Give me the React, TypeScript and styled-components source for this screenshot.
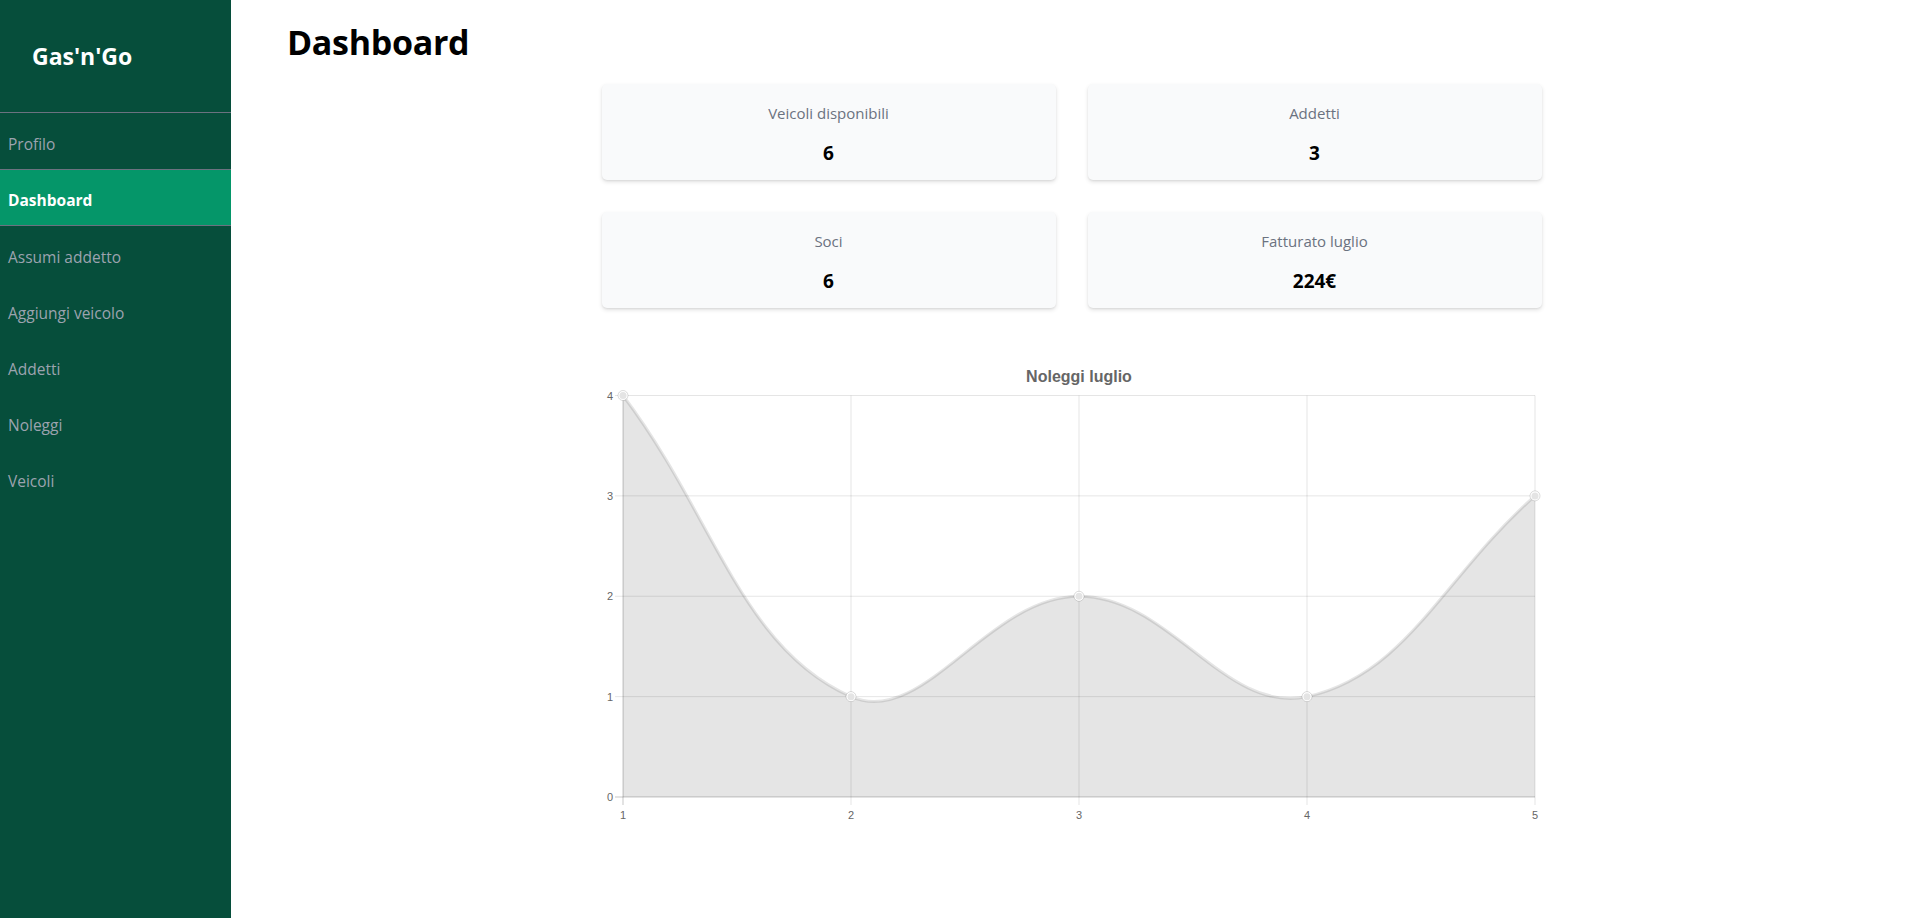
import styled, { createGlobalStyle } from 'styled-components';
import { FunctionComponent } from 'react';

const GlobalStyle = createGlobalStyle`
    * {
        box-sizing: border-box;
    }
    html, body {
        margin: 0;
        padding: 0;
        height: 100%;
        background: #ffffff;
        font-family: 'Open Sans', 'Noto Sans', sans-serif;
    }
    #root {
        height: 100%;
    }
`;

const Layout = styled.div`
    display: flex;
    min-height: 918px;
    height: 100%;
`;

const Sidebar = styled.aside`
    width: 231px;
    flex-shrink: 0;
    background: #064e3b;
    display: flex;
    flex-direction: column;
`;

const Brand = styled.div`
    height: 113px;
    display: flex;
    align-items: center;
    padding-left: 32px;
    border-bottom: 1px solid #6b7280;
    color: #ffffff;
    font-size: 23px;
    font-weight: 700;
`;

const NavItem = styled.a<{ $active?: boolean }>`
    display: flex;
    align-items: center;
    height: ${(p) => (p.$active ? '57px' : '56px')};
    padding: 5px 0 0 8px;
    font-size: 15.5px;
    text-decoration: none;
    color: ${(p) => (p.$active ? '#ffffff' : '#9ca3af')};
    font-weight: ${(p) => (p.$active ? 700 : 400)};
    background: ${(p) => (p.$active ? '#059669' : 'transparent')};
    border-top: ${(p) => (p.$active ? '1px solid #6b7280' : 'none')};
    border-bottom: ${(p) => (p.$active ? '1px solid #6b7280' : 'none')};
`;

const Main = styled.main`
    flex: 1;
    padding: 14px 56px 0;
`;

const Title = styled.h1`
    margin: 0;
    font-size: 34px;
    line-height: 56px;
    font-weight: 700;
    color: #000000;
    letter-spacing: -0.3px;
`;

const Content = styled.div`
    width: 940px;
    margin: 14px auto 0;
`;

const Stats = styled.div`
    display: grid;
    grid-template-columns: 1fr 1fr;
    gap: 32px;
`;

const Card = styled.div`
    height: 96px;
    background: #f9fafb;
    border-radius: 5px;
    box-shadow: 0 2px 4px rgba(0, 0, 0, 0.12), 0 1px 2px rgba(0, 0, 0, 0.06);
    display: flex;
    flex-direction: column;
    align-items: center;
    padding-top: 16px;
`;

const CardLabel = styled.span`
    font-size: 15px;
    line-height: 26px;
    color: #6b7280;
`;

const CardValue = styled.span`
    margin-top: 14px;
    font-size: 19px;
    line-height: 26px;
    font-weight: 700;
    color: #000000;
`;

const ChartBox = styled.div`
    margin-top: 40px;
    svg {
        display: block;
    }
`;

const menu = ['Profilo', 'Dashboard', 'Assumi addetto', 'Aggiungi veicolo', 'Addetti', 'Noleggi', 'Veicoli'];

const stats = [
    { label: 'Veicoli disponibili', value: '6' },
    { label: 'Addetti', value: '3' },
    { label: 'Soci', value: '6' },
    { label: 'Fatturato luglio', value: '224€' },
];

const rentals = [4, 1, 2, 1, 3];

type Pt = { x: number; y: number };

// Chart.js-like spline (tension 0.4, capped to chart area)
const splinePath = (pts: Pt[], area: { l: number; r: number; t: number; b: number }) => {
    const t = 0.4;
    const clamp = (p: Pt) => ({
        x: Math.min(area.r, Math.max(area.l, p.x)),
        y: Math.min(area.b, Math.max(area.t, p.y)),
    });
    const cps = pts.map((cur, i) => {
        const prev = pts[i - 1] || cur;
        const next = pts[i + 1] || cur;
        const d01 = Math.hypot(cur.x - prev.x, cur.y - prev.y);
        const d12 = Math.hypot(next.x - cur.x, next.y - cur.y);
        const s01 = d01 / (d01 + d12) || 0;
        const s12 = d12 / (d01 + d12) || 0;
        return {
            before: clamp({ x: cur.x - t * s01 * (next.x - prev.x), y: cur.y - t * s01 * (next.y - prev.y) }),
            after: clamp({ x: cur.x + t * s12 * (next.x - prev.x), y: cur.y + t * s12 * (next.y - prev.y) }),
        };
    });
    let d = `M${pts[0].x},${pts[0].y}`;
    for (let i = 1; i < pts.length; i++) {
        const a = cps[i - 1].after;
        const b = cps[i].before;
        d += ` C${a.x},${a.y} ${b.x},${b.y} ${pts[i].x},${pts[i].y}`;
    }
    return d;
};

const RentalsChart: FunctionComponent<{ data: number[] }> = ({ data }) => {
    const W = 940;
    const H = 480;
    const area = { l: 21, r: 933, t: 47.5, b: 449 };
    const max = 4;
    const xs = data.map((_, i) => area.l + (i * (area.r - area.l)) / (data.length - 1));
    const yOf = (v: number) => area.b - (v * (area.b - area.t)) / max;
    const pts = data.map((v, i) => ({ x: xs[i], y: yOf(v) }));
    const line = splinePath(pts, area);
    const fill = `${line} L${area.r},${area.b} L${area.l},${area.b} Z`;
    const ticks = [0, 1, 2, 3, 4];

    return (
        <svg width={W} height={H} viewBox={`0 0 ${W} ${H}`} fontFamily="'Liberation Sans', Arial, sans-serif">
            <text x={(area.l + area.r) / 2} y={34} textAnchor="middle" fontSize={16} fontWeight={700} fill="#666">
                Noleggi luglio
            </text>
            {ticks.map((v) => (
                <line
                    key={`h${v}`}
                    x1={area.l - 8}
                    x2={area.r}
                    y1={yOf(v)}
                    y2={yOf(v)}
                    stroke={v === 0 ? 'rgba(0,0,0,0.22)' : 'rgba(0,0,0,0.1)'}
                    strokeWidth={1}
                />
            ))}
            {xs.map((x, i) => (
                <line
                    key={`v${i}`}
                    x1={x}
                    x2={x}
                    y1={area.t}
                    y2={area.b + 8}
                    stroke={i === 0 ? 'rgba(0,0,0,0.22)' : 'rgba(0,0,0,0.1)'}
                    strokeWidth={1}
                />
            ))}
            <path d={fill} fill="rgba(0,0,0,0.1)" />
            <path d={line} fill="none" stroke="rgba(0,0,0,0.1)" strokeWidth={3} />
            {pts.map((p, i) => (
                <g key={`p${i}`}>
                    <circle cx={p.x} cy={p.y} r={5} fill="#ffffff" stroke="rgba(0,0,0,0.14)" strokeWidth={1} />
                    <circle cx={p.x} cy={p.y} r={3.5} fill="#e4e4e4" />
                </g>
            ))}
            {ticks.map((v) => (
                <text key={`yl${v}`} x={area.l - 10} y={yOf(v) + 4} textAnchor="end" fontSize={11} fill="#666">
                    {v}
                </text>
            ))}
            {xs.map((x, i) => (
                <text key={`xl${i}`} x={x} y={area.b + 22} textAnchor="middle" fontSize={11} fill="#666">
                    {i + 1}
                </text>
            ))}
        </svg>
    );
};

export default function App() {
    return (
        <Layout>
            <GlobalStyle />
            <Sidebar>
                <Brand>Gas'n'Go</Brand>
                {menu.map((item) => (
                    <NavItem key={item} href="#" $active={item === 'Dashboard'}>
                        {item}
                    </NavItem>
                ))}
            </Sidebar>
            <Main>
                <Title>Dashboard</Title>
                <Content>
                    <Stats>
                        {stats.map((s) => (
                            <Card key={s.label}>
                                <CardLabel>{s.label}</CardLabel>
                                <CardValue>{s.value}</CardValue>
                            </Card>
                        ))}
                    </Stats>
                    <ChartBox>
                        <RentalsChart data={rentals} />
                    </ChartBox>
                </Content>
            </Main>
        </Layout>
    );
}
